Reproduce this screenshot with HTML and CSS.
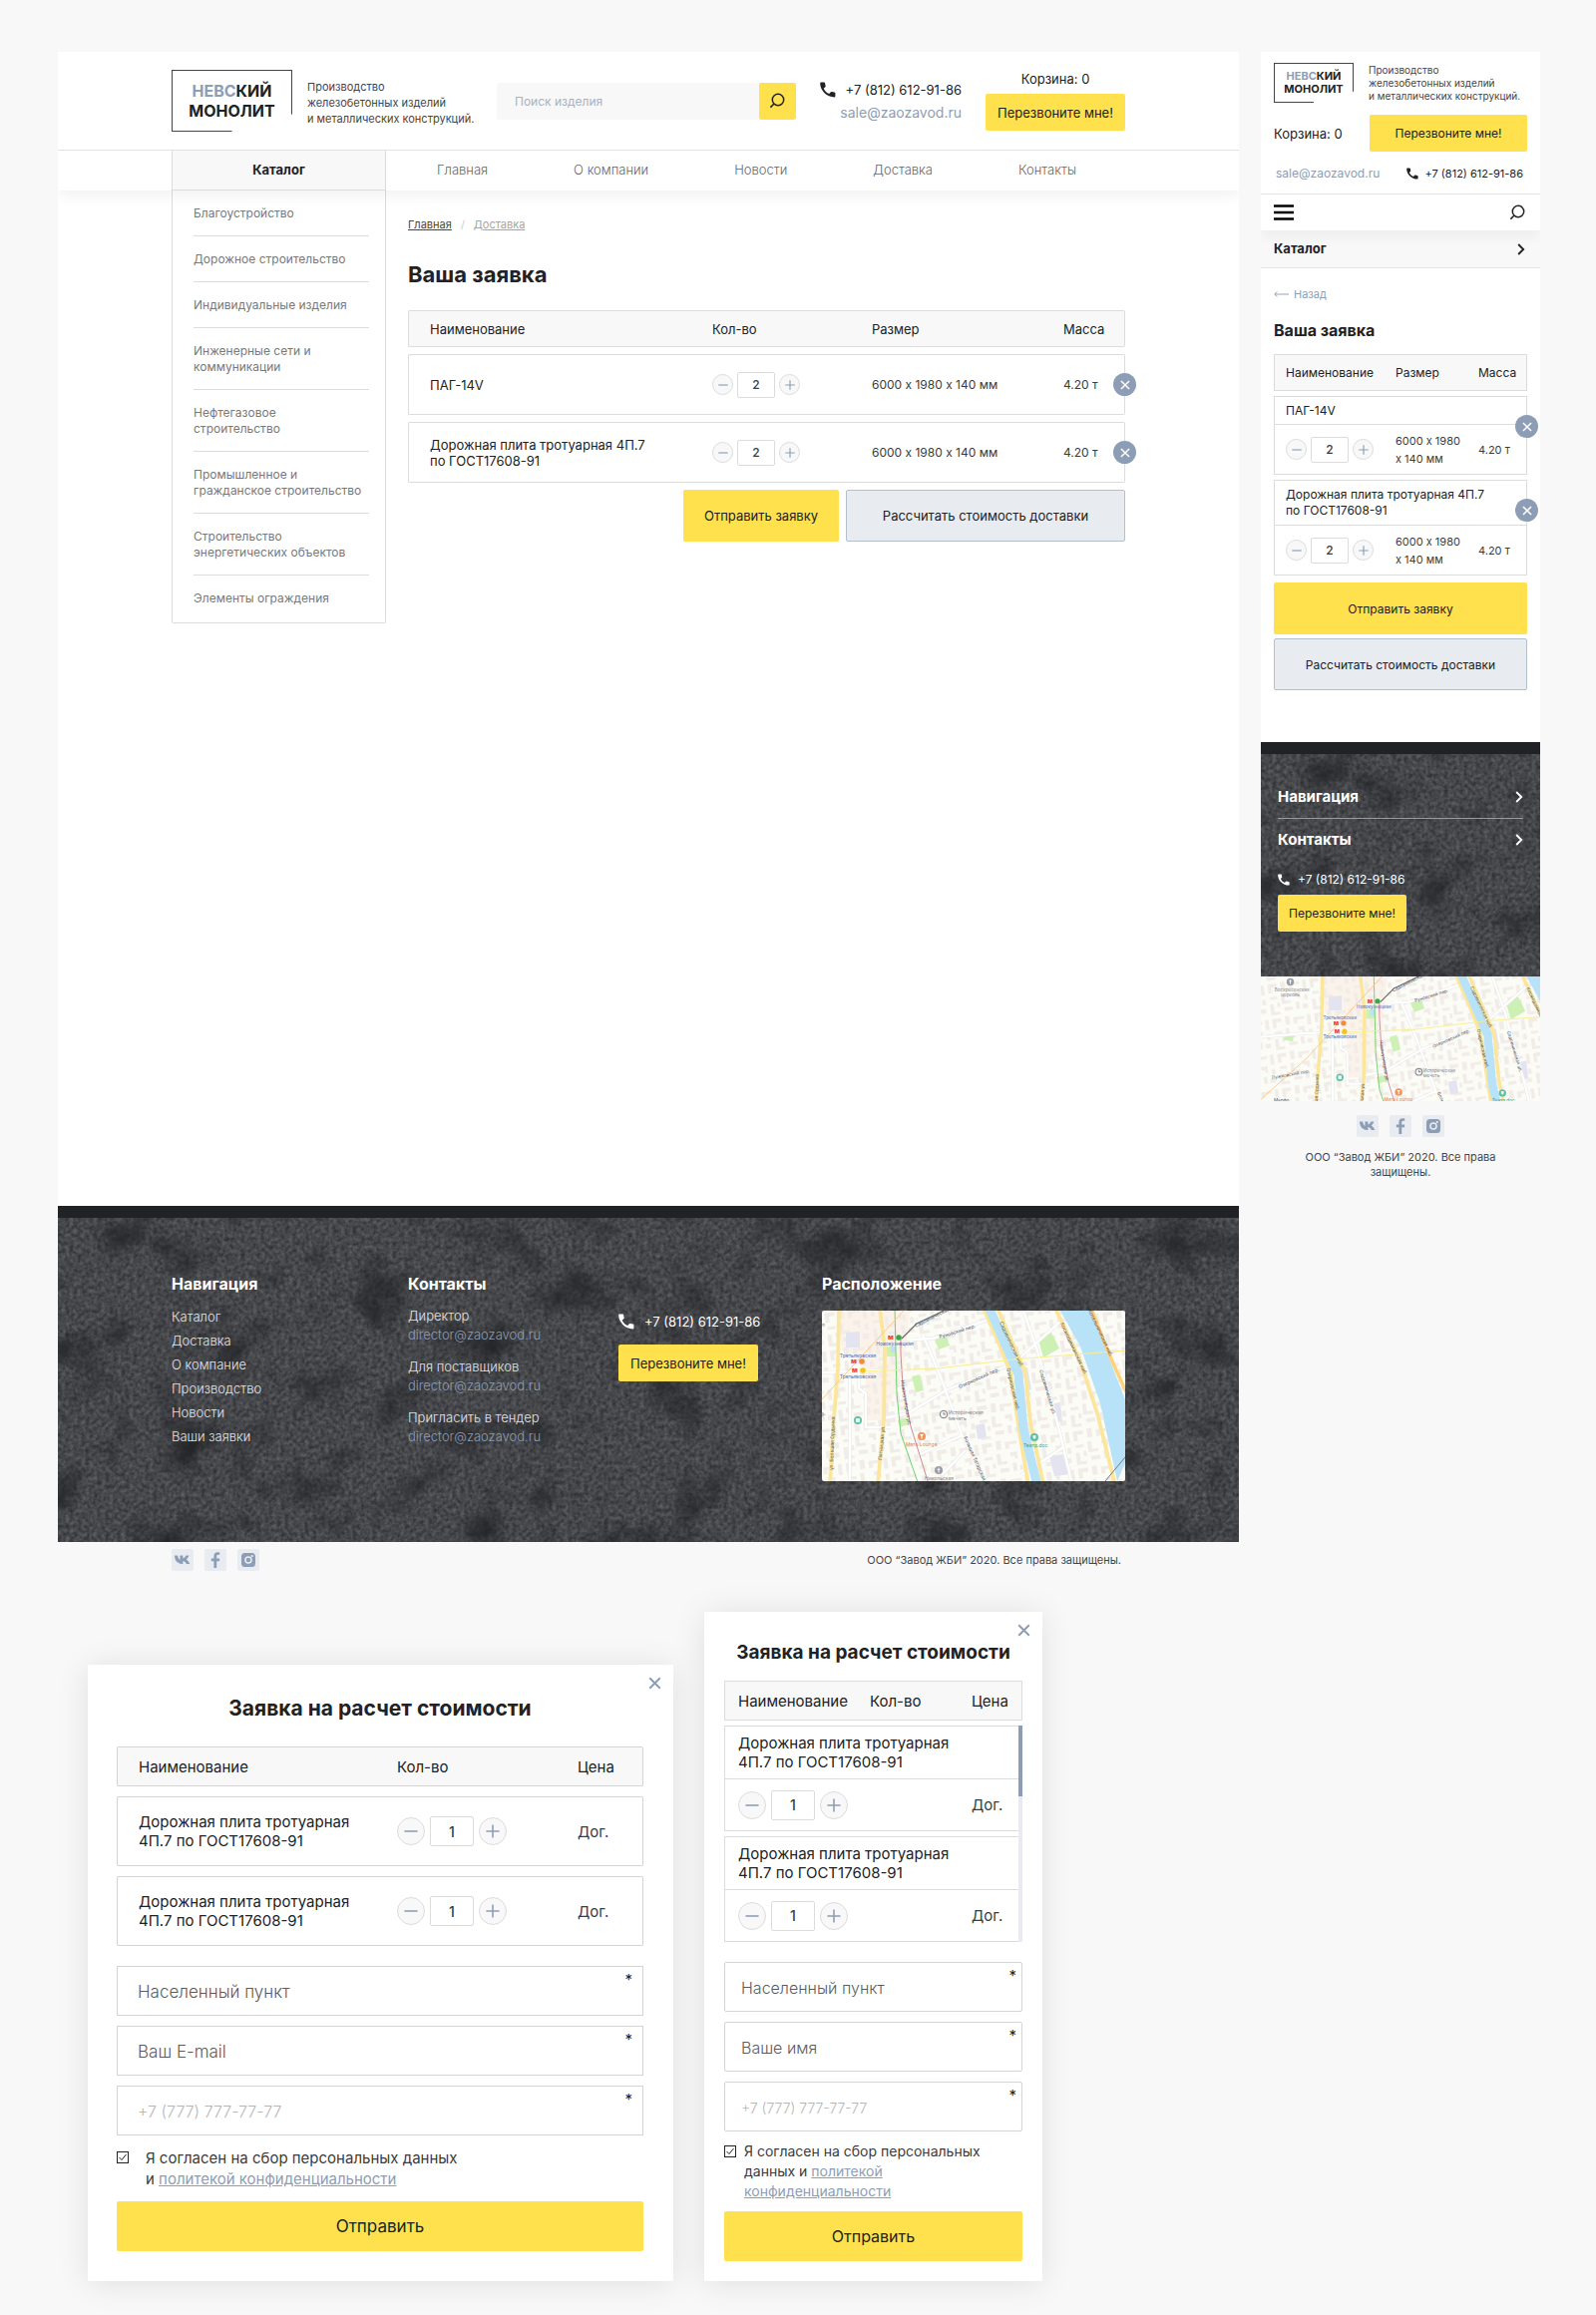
FILE: index.html
```html
<!DOCTYPE html>
<html lang="ru">
<head>
    <meta charset="UTF-8">
    <meta name="viewport" content="width=device-width, initial-scale=1.0">
    <title>Невский Монолит - Ваша заявка</title>
    <link rel="stylesheet" href="styles.css">
</head>
<body>
    <!-- shared icons -->
    <svg class="sprite" aria-hidden="true">
        <defs>
            <symbol id="i-phone" viewBox="0 0 16 16"><path d="M1 0.6h3.2c.5 0 .8.3.9.8.1 1 .3 1.900.6 2.800.1.3 0 .7-.2.9l-1.800 1.600c1.300 2.500 3 4.200 5.500 5.400l1.700-1.800c.2-.3.6-.3.9-.2.9.3 1.800.4 2.800.5.500 0 .8.4.8.9v3c0 .5-.3.9-.8.9C6.900 15.400.2 8.700.2 1.500c0-.5.3-.9.8-.9z"/></symbol>
            <symbol id="i-search" viewBox="0 0 16 16"><g fill="none" stroke="currentColor" stroke-width="1.500"><circle cx="9" cy="7" r="5.700"/><path d="M5 11l-3.600 3.600"/></g></symbol>
            <symbol id="i-plus" viewBox="0 0 16 16"><path d="M0.500 8h15M8 .5v15" fill="none" stroke="currentColor" stroke-width="1.800"/></symbol>
            <symbol id="i-minus" viewBox="0 0 16 16"><path d="M0.500 8h15" fill="none" stroke="currentColor" stroke-width="1.800"/></symbol>
            <symbol id="i-close" viewBox="0 0 16 16"><path d="M1.500 1.500l13 13M14.500 1.500l-13 13" fill="none" stroke="currentColor" stroke-width="2.400"/></symbol>
            <symbol id="i-chevron" viewBox="0 0 8 12"><path d="M1.200 1l5 5-5 5" fill="none" stroke="currentColor" stroke-width="1.900"/></symbol>
            <symbol id="i-back" viewBox="0 0 16 8"><path d="M16 4H1M3.500 1.200L.8 4l2.700 2.800" fill="none" stroke="currentColor"/></symbol>
            <symbol id="i-burger" viewBox="0 0 20 16"><path d="M0 1.500h20M0 8h20M0 14.500h20" fill="none" stroke="currentColor" stroke-width="2.400"/></symbol>
            <symbol id="i-vk" viewBox="0 0 16 16"><path d="M0 3.600h3.100c.3 2.100 1.200 3.800 2.300 4.600V3.600h3v3c1.300-.3 2.300-1.500 3-3h3c-.5 1.800-1.600 3.100-2.600 3.900 1.300.7 2.700 2.200 3.500 4.400h-3.400c-.6-1.400-1.800-2.600-3.500-2.900v2.900h-1C3.200 11.900.2 9 0 3.600z"/></symbol>
            <symbol id="i-fb" viewBox="0 0 16 16"><path d="M6.400 16V9.200H3.800V6.500h2.600V4.400C6.400 1.700 7.800.3 10.200.3c.8 0 1.500.1 2 .2v2.300h-1.300c-1.300 0-1.700.7-1.700 1.700v2h2.900v2.700H9.200V16z"/></symbol>
            <symbol id="i-inst" viewBox="0 0 16 16"><path fill-rule="evenodd" d="M4.500 1h7A3.500 3.500 0 0 1 15 4.500v7a3.500 3.500 0 0 1-3.500 3.500h-7A3.500 3.500 0 0 1 1 11.500v-7A3.500 3.500 0 0 1 4.500 1zM8 4.200a3.800 3.800 0 1 0 0 7.600 3.800 3.800 0 0 0 0-7.600zm0 1.500a2.300 2.300 0 1 1 0 4.600 2.300 2.300 0 0 1 0-4.600zM11.800 3a1.100 1.100 0 1 0 0 2.200 1.100 1.100 0 0 0 0-2.200z"/></symbol>

            <!-- concrete wall for the footers -->
            <filter id="concrete" x="0" y="0" width="100%" height="100%" color-interpolation-filters="sRGB">
                <feTurbulence type="fractalNoise" baseFrequency="0.250" numOctaves="4" seed="4" result="fine"/>
                <feColorMatrix in="fine" type="matrix" values="0.260 0 0 0 0.145  0.260 0 0 0 0.150  0.260 0 0 0 0.165  0 0 0 0 1" result="grain"/>
                <feTurbulence type="fractalNoise" baseFrequency="0.020" numOctaves="6" seed="11" result="big"/>
                <feColorMatrix in="big" type="matrix" values="0 0 0 0 0.140  0 0 0 0 0.145  0 0 0 0 0.160  -2.400 0 0 0 1.200" result="stains"/>
                <feMerge><feMergeNode in="grain"/><feMergeNode in="stains"/></feMerge>
            </filter>

            <pattern id="blocks" width="46" height="38" patternUnits="userSpaceOnUse" patternTransform="rotate(-8)">
                <path fill="#f1ece8" d="M2 3h10v4H6v6H2zM16 2h5v9h-5zM25 4h12v3h-8v4h-4zM40 3h4v11h-4zM3 17h8v3H3zM15 15h4v8h6v3H15zM29 15h7v7h-3v-3h-4zM40 19h4v6h-4zM2 25h4v9h6v3H2zM10 24h3v5h-3zM17 30h9v4h-9zM30 26h4v8h-4zM37 29h6v5h-6z"/>
            </pattern>

            <!-- city map, shared by both footers -->
            <g id="city">
                <rect x="-60" width="370" height="175" fill="#fcfcf7"/>
                <path fill="#fbf3ea" d="M14 0h74l-6 60-20 50H44V60L20 40z"/>
                <rect x="-60" width="370" height="175" fill="url(#blocks)"/>
                <g fill="#e4e4f0"><path d="M154 115l9-2 2 14-9 2zM233 93l6-1 2 19-7 1zM198 58l8-1 4 22-6 2zM228 146l14-2 5 20-14 2zM24 22l14-1v16H24z"/></g>
                <g fill="#cdf0b4"><path d="M217 29l13-7 8 16-16 9zM113 29l12-3 3 9-11 4zM90 66l8-2 4 16-8 2zM65 36h9v10h-9zM76 110l10-3 1 7-9 3zM-24 62l10 1-1 8-10-2z"/></g>
                <path fill="#b8e2f7" d="M69 36h5v6h-5z"/>
                <g fill="none" stroke="#e8e8e8" stroke-width="3.500">
                    <path d="M91 29l20-1 56-19M62 108l24-5 40-24 58-23M101 24l17 40 22 60 24 47M202 0l14 40 22 80 12 51M192 53l47-42M28 64v107M37 62v16l7 5v34h25M96 145l45-20M120 165l24-25M-50 66l50-4 60-2M200 165l42-28M200 64l10 30"/>
                </g>
                <g fill="none" stroke="#fff" stroke-width="2.400">
                    <path d="M91 29l20-1 56-19M62 108l24-5 40-24 58-23M101 24l17 40 22 60 24 47M202 0l14 40 22 80 12 51M192 53l47-42M28 64v107M37 62v16l7 5v34h25M96 145l45-20M120 165l24-25M-50 66l50-4 60-2M200 165l42-28M200 64l10 30"/>
                </g>
                <g fill="none" stroke="#fce69c" stroke-width="3.800">
                    <path d="M17-2l-1 60-4 50-4 66M58-2l5 40-1 72-6 64M162-2l15 34 12 30 9 60 9 52M176-2l15 34 13 30 5 50 13 62"/>
                    <path d="M234-2l24 50 18 55 18 72"/>
                </g>
                <path fill="none" stroke="#b8e2f7" stroke-width="9" d="M168-2l15 34 14 32 5 54 14 58"/>
                <path fill="#b8e2f7" d="M239 0h30l17 43 18 46v64l-8 18-17-78-20-57z"/>
                <path fill="none" stroke="#ffd17a" stroke-width="3.500" d="M270-2l18 46 18 40"/>
                <path fill="none" stroke="#777" d="M284 171l20-24"/>
                <path fill="none" stroke="#6fd06f" d="M73-2l2 85 4 40 18 52"/>
                <path fill="none" stroke="#d98596" d="M79 28v15l2 33 8 40 18 58"/>
                <path fill="none" stroke="#666" stroke-width="1.200" d="M124-1l-10 5-19 9-15 15"/>
                <path fill="none" stroke="#f9c98b" d="M82 0L0 89l-50 45"/>
                <path fill="none" stroke="#faee8a" d="M37 61l79-3 76-9 112-9"/>

                <g class="map-street">
                    <text transform="translate(94 17) rotate(-27)">Садовническая</text>
                    <text transform="translate(118 28) rotate(-17)">Руновский пер.</text>
                    <text transform="translate(138 78) rotate(-24)">Озерковский пер.</text>
                    <text transform="translate(178 12) rotate(65)">Садовническая наб.</text>
                    <text transform="translate(185 58) rotate(77)">Озерковская наб.</text>
                    <text transform="translate(218 60) rotate(73)">Садовническая ул.</text>
                    <text transform="translate(239 13) rotate(65)">Космодамианская наб.</text>
                    <text transform="translate(267 0) rotate(65)">Котельническая наб.</text>
                    <text transform="translate(79 70) rotate(81)">Новокузнецкая ул.</text>
                    <text transform="translate(142 127) rotate(66)">Большая Татарская ул.</text>
                    <text transform="translate(11 160) rotate(-88)">ул. Большая Ордынка</text>
                    <text transform="translate(60 150) rotate(-85)">Пятницкая ул.</text>
                    <text transform="translate(-38 112) rotate(-10)">Лужковский пер.</text>
                    <text x="-36" y="137">Марфо</text>
                </g>
                <g class="map-metro">
                    <text x="73" y="35">Новокузнецкая</text>
                    <text x="36" y="47">Третьяковская</text>
                    <text x="36" y="68">Третьяковская</text>
                </g>
                <g class="map-m">
                    <text x="66" y="29">м</text>
                    <text x="29" y="53">м</text>
                    <text x="30" y="62">м</text>
                </g>
                <circle cx="77" cy="27" r="2.800" fill="#3aa648"/>
                <circle cx="40" cy="51" r="2.800" fill="#f08a3c"/>
                <circle cx="41" cy="60" r="2.800" fill="#f3c51b"/>
                <g fill="none" stroke="#8c8f99" stroke-width="1.200">
                    <circle cx="122" cy="104" r="3.600"/><path d="M122 102v2h2"/>
                </g>
                <g fill="#9a9ca5"><circle cx="117" cy="160" r="4"/><circle cx="-18" cy="6" r="4"/></g>
                <path d="M117 157.500v5M115.500 159.300h3M-18 3.500v5M-19.500 5.300h3" stroke="#fff" stroke-width=".9"/>
                <g class="map-place">
                    <text x="127" y="104">Историческая</text>
                    <text x="127" y="110">мечеть</text>
                    <text x="103" y="170">Никольская</text>
                    <text x="-35" y="16">Воскресенская</text>
                    <text x="-28" y="22">церковь</text>
                </g>
                <circle cx="100" cy="126" r="4" fill="#f39157"/>
                <path d="M98 124h4l-2 2.500zM99.500 126h1v2.500h-1z" fill="#fff"/>
                <text class="map-cafe" x="84" y="136">Мята Lounge</text>
                <g fill="#5dbfa3"><circle cx="213" cy="127" r="4"/><circle cx="36" cy="110" r="4"/></g>
                <path d="M211.500 125h3v2.500l-1.500 1.500-1.500-1.500zM34 108h4v4h-4z" fill="#fff" opacity=".85"/>
                <text class="map-theatre" x="202" y="137">Театр.doc</text>
            </g>
        </defs>
    </svg>

    <div class="boards">
        <div class="desktop">
            <header>
                <div class="container top">
                    <a class="logo" href="#"><span>НЕВС</span>КИЙ<br>МОНОЛИТ</a>
                    <p class="tagline">Производство<br>железобетонных изделий<br>и металлических конструкций.</p>
                    <form class="search">
                        <input type="text" placeholder="Поиск изделия" aria-label="Поиск изделия">
                        <button type="button" aria-label="Найти"><svg><use href="#i-search"/></svg></button>
                    </form>
                    <div class="contacts">
                        <a class="tel" href="tel:+78126129186"><svg><use href="#i-phone"/></svg>+7 (812) 612-91-86</a>
                        <a class="mail" href="#">sale@zaozavod.ru</a>
                    </div>
                    <div class="cart">
                        <a href="#">Корзина: 0</a>
                        <button class="btn" type="button">Перезвоните мне!</button>
                    </div>
                </div>
                <div class="menu">
                    <div class="container">
                        <a class="menu-catalog" href="#">Каталог</a>
                        <nav>
                            <a href="#">Главная</a>
                            <a href="#">О компании</a>
                            <a href="#">Новости</a>
                            <a href="#">Доставка</a>
                            <a href="#">Контакты</a>
                        </nav>
                    </div>
                </div>
            </header>

            <main class="container page">
                <ul class="catalog">
                    <li><a href="#">Благоустройство</a></li>
                    <li><a href="#">Дорожное строительство</a></li>
                    <li><a href="#">Индивидуальные изделия</a></li>
                    <li><a href="#">Инженерные сети и<br>коммуникации</a></li>
                    <li><a href="#">Нефтегазовое<br>строительство</a></li>
                    <li><a href="#">Промышленное и<br>гражданское строительство</a></li>
                    <li><a href="#">Строительство<br>энергетических объектов</a></li>
                    <li><a href="#">Элементы ограждения</a></li>
                </ul>
                <section class="content">
                    <div class="crumbs"><a href="#">Главная</a><span>/</span><a class="current" href="#">Доставка</a></div>
                    <h1>Ваша заявка</h1>
                    <table class="order">
                        <thead>
                            <tr><th class="col-name">Наименование</th><th class="col-qty">Кол-во</th><th class="col-size">Размер</th><th>Масса</th></tr>
                        </thead>
                        <tbody>
                            <tr>
                                <td class="name">ПАГ-14V</td>
                                <td><div class="qty"><button type="button" aria-label="Меньше"><svg><use href="#i-minus"/></svg></button><input type="text" value="2" aria-label="Количество"><button type="button" aria-label="Больше"><svg><use href="#i-plus"/></svg></button></div></td>
                                <td>6000 х 1980 х 140 мм</td>
                                <td>4.20 т<button class="remove" type="button" aria-label="Удалить"><svg><use href="#i-close"/></svg></button></td>
                            </tr>
                            <tr>
                                <td class="name">Дорожная плита тротуарная 4П.7<br>по ГОСТ17608-91</td>
                                <td><div class="qty"><button type="button" aria-label="Меньше"><svg><use href="#i-minus"/></svg></button><input type="text" value="2" aria-label="Количество"><button type="button" aria-label="Больше"><svg><use href="#i-plus"/></svg></button></div></td>
                                <td>6000 х 1980 х 140 мм</td>
                                <td>4.20 т<button class="remove" type="button" aria-label="Удалить"><svg><use href="#i-close"/></svg></button></td>
                            </tr>
                        </tbody>
                    </table>
                    <div class="actions">
                        <button class="btn btn-send" type="button">Отправить заявку</button>
                        <button class="btn btn-gray" type="button">Рассчитать стоимость доставки</button>
                    </div>
                </section>
            </main>

            <footer class="footer">
                <svg class="wall" aria-hidden="true"><rect width="100%" height="100%" filter="url(#concrete)"/></svg>
                <div class="container footer-cols">
                    <div>
                        <h3>Навигация</h3>
                        <ul class="footer-nav">
                            <li><a href="#">Каталог</a></li>
                            <li><a href="#">Доставка</a></li>
                            <li><a href="#">О компание</a></li>
                            <li><a href="#">Производство</a></li>
                            <li><a href="#">Новости</a></li>
                            <li><a href="#">Ваши заявки</a></li>
                        </ul>
                    </div>
                    <div>
                        <h3>Контакты</h3>
                        <dl class="footer-mails">
                            <dt>Директор</dt><dd><a href="#">director@zaozavod.ru</a></dd>
                            <dt>Для поставщиков</dt><dd><a href="#">director@zaozavod.ru</a></dd>
                            <dt>Пригласить в тендер</dt><dd><a href="#">director@zaozavod.ru</a></dd>
                        </dl>
                    </div>
                    <div class="footer-call">
                        <a class="tel" href="tel:+78126129186"><svg><use href="#i-phone"/></svg>+7 (812) 612-91-86</a>
                        <button class="btn" type="button">Перезвоните мне!</button>
                    </div>
                    <div>
                        <h3>Расположение</h3>
                        <svg class="map" viewBox="0 0 304 171" preserveAspectRatio="xMidYMid slice"><use href="#city"/></svg>
                    </div>
                </div>
            </footer>
            <div class="container bottom">
                <div class="social">
                    <a href="#" aria-label="VK"><svg><use href="#i-vk"/></svg></a>
                    <a href="#" aria-label="Facebook"><svg><use href="#i-fb"/></svg></a>
                    <a href="#" aria-label="Instagram"><svg><use href="#i-inst"/></svg></a>
                </div>
                <p>ООО “Завод ЖБИ” 2020. Все права защищены.</p>
            </div>
        </div>

        <div class="mobile">
            <header>
                <div class="m-top">
                    <div class="m-row m-brand">
                        <a class="logo" href="#"><span>НЕВС</span>КИЙ<br>МОНОЛИТ</a>
                        <p class="tagline">Производство<br>железобетонных изделий<br>и металлических конструкций.</p>
                    </div>
                    <div class="m-row">
                        <a class="m-cart" href="#">Корзина: 0</a>
                        <button class="btn" type="button">Перезвоните мне!</button>
                    </div>
                    <div class="m-row m-contacts">
                        <a class="mail" href="#">sale@zaozavod.ru</a>
                        <a class="tel" href="tel:+78126129186"><svg><use href="#i-phone"/></svg>+7 (812) 612-91-86</a>
                    </div>
                </div>
                <div class="m-bar">
                    <button type="button" aria-label="Меню"><svg class="burger"><use href="#i-burger"/></svg></button>
                    <button type="button" aria-label="Поиск"><svg class="loupe"><use href="#i-search"/></svg></button>
                </div>
                <a class="m-catalog" href="#">Каталог<svg><use href="#i-chevron"/></svg></a>
            </header>
            <main class="m-page">
                <a class="back" href="#"><svg><use href="#i-back"/></svg>Назад</a>
                <h1>Ваша заявка</h1>
                <table class="m-order">
                    <thead>
                        <tr><th class="col-name">Наименование</th><th class="col-size">Размер</th><th>Масса</th></tr>
                    </thead>
                    <tbody>
                        <tr><td class="name" colspan="3">ПАГ-14V<button class="remove" type="button" aria-label="Удалить"><svg><use href="#i-close"/></svg></button></td></tr>
                        <tr>
                            <td><div class="qty"><button type="button" aria-label="Меньше"><svg><use href="#i-minus"/></svg></button><input type="text" value="2" aria-label="Количество"><button type="button" aria-label="Больше"><svg><use href="#i-plus"/></svg></button></div></td>
                            <td class="size">6000 х 1980<br>х 140 мм</td>
                            <td>4.20 т</td>
                        </tr>
                    </tbody>
                    <tbody>
                        <tr><td class="name name-tall" colspan="3">Дорожная плита тротуарная 4П.7<br>по ГОСТ17608-91<button class="remove" type="button" aria-label="Удалить"><svg><use href="#i-close"/></svg></button></td></tr>
                        <tr>
                            <td><div class="qty"><button type="button" aria-label="Меньше"><svg><use href="#i-minus"/></svg></button><input type="text" value="2" aria-label="Количество"><button type="button" aria-label="Больше"><svg><use href="#i-plus"/></svg></button></div></td>
                            <td class="size">6000 х 1980<br>х 140 мм</td>
                            <td>4.20 т</td>
                        </tr>
                    </tbody>
                </table>
                <div class="m-actions">
                    <button class="btn btn-send" type="button">Отправить заявку</button>
                    <button class="btn btn-gray" type="button">Рассчитать стоимость доставки</button>
                </div>
            </main>
            <footer class="footer m-footer">
                <svg class="wall" aria-hidden="true"><rect width="100%" height="100%" filter="url(#concrete)"/></svg>
                <div class="m-footer-in">
                    <h3>Навигация<svg><use href="#i-chevron"/></svg></h3>
                    <hr>
                    <h3>Контакты<svg><use href="#i-chevron"/></svg></h3>
                    <a class="tel" href="tel:+78126129186"><svg><use href="#i-phone"/></svg>+7 (812) 612-91-86</a>
                    <button class="btn" type="button">Перезвоните мне!</button>
                </div>
            </footer>
            <div class="m-bottom">
                <svg class="map" viewBox="-50 0 304 136" preserveAspectRatio="xMidYMid slice"><use href="#city"/></svg>
                <div class="social">
                    <a href="#" aria-label="VK"><svg><use href="#i-vk"/></svg></a>
                    <a href="#" aria-label="Facebook"><svg><use href="#i-fb"/></svg></a>
                    <a href="#" aria-label="Instagram"><svg><use href="#i-inst"/></svg></a>
                </div>
                <p>ООО “Завод ЖБИ” 2020. Все права<br>защищены.</p>
            </div>
        </div>
    </div>

    <div class="modals">
        <form class="modal">
            <button class="modal-close" type="button" aria-label="Закрыть"><svg><use href="#i-close"/></svg></button>
            <h2>Заявка на расчет стоимости</h2>
            <table class="calc">
                <thead>
                    <tr><th class="col-name">Наименование</th><th class="col-qty">Кол-во</th><th>Цена</th></tr>
                </thead>
                <tbody>
                    <tr>
                        <td class="name">Дорожная плита тротуарная<br>4П.7 по ГОСТ17608-91</td>
                        <td><div class="qty qty-lg"><button type="button" aria-label="Меньше"><svg><use href="#i-minus"/></svg></button><input type="text" value="1" aria-label="Количество"><button type="button" aria-label="Больше"><svg><use href="#i-plus"/></svg></button></div></td>
                        <td>Дог.</td>
                    </tr>
                    <tr>
                        <td class="name">Дорожная плита тротуарная<br>4П.7 по ГОСТ17608-91</td>
                        <td><div class="qty qty-lg"><button type="button" aria-label="Меньше"><svg><use href="#i-minus"/></svg></button><input type="text" value="1" aria-label="Количество"><button type="button" aria-label="Больше"><svg><use href="#i-plus"/></svg></button></div></td>
                        <td>Дог.</td>
                    </tr>
                </tbody>
            </table>
            <div class="fields">
                <label class="field"><input type="text" placeholder="Населенный пункт" aria-label="Населенный пункт"><span>*</span></label>
                <label class="field"><input type="text" placeholder="Ваш E-mail" aria-label="Ваш E-mail"><span>*</span></label>
                <label class="field field-tel"><input type="tel" placeholder="+7 (777) 777-77-77" aria-label="Телефон"><span>*</span></label>
            </div>
            <div class="consent">
                <input type="checkbox" id="agree" checked>
                <label for="agree">Я согласен на сбор персональных данных<br>и <a href="#">политекой конфиденциальности</a></label>
            </div>
            <button class="btn btn-submit" type="button">Отправить</button>
        </form>

        <form class="modal modal-sm">
            <button class="modal-close" type="button" aria-label="Закрыть"><svg><use href="#i-close"/></svg></button>
            <h2>Заявка на расчет стоимости</h2>
            <div class="calc-scroll">
                <table class="calc-sm">
                    <thead>
                        <tr><th class="col-name">Наименование</th><th class="col-qty">Кол-во</th><th>Цена</th></tr>
                    </thead>
                    <tbody>
                        <tr><td class="name" colspan="3">Дорожная плита тротуарная<br>4П.7 по ГОСТ17608-91</td></tr>
                        <tr>
                            <td colspan="2"><div class="qty qty-lg"><button type="button" aria-label="Меньше"><svg><use href="#i-minus"/></svg></button><input type="text" value="1" aria-label="Количество"><button type="button" aria-label="Больше"><svg><use href="#i-plus"/></svg></button></div></td>
                            <td>Дог.</td>
                        </tr>
                    </tbody>
                    <tbody>
                        <tr><td class="name" colspan="3">Дорожная плита тротуарная<br>4П.7 по ГОСТ17608-91</td></tr>
                        <tr>
                            <td colspan="2"><div class="qty qty-lg"><button type="button" aria-label="Меньше"><svg><use href="#i-minus"/></svg></button><input type="text" value="1" aria-label="Количество"><button type="button" aria-label="Больше"><svg><use href="#i-plus"/></svg></button></div></td>
                            <td>Дог.</td>
                        </tr>
                    </tbody>
                </table>
                <div class="scrollbar"></div>
            </div>
            <div class="fields">
                <label class="field"><input type="text" placeholder="Населенный пункт" aria-label="Населенный пункт"><span>*</span></label>
                <label class="field"><input type="text" placeholder="Ваше имя" aria-label="Ваше имя"><span>*</span></label>
                <label class="field field-tel"><input type="tel" placeholder="+7 (777) 777-77-77" aria-label="Телефон"><span>*</span></label>
            </div>
            <div class="consent">
                <input type="checkbox" id="agree-sm" checked>
                <label for="agree-sm">Я согласен на сбор персональных<br>данных и <a href="#">политекой<br>конфиденциальности</a></label>
            </div>
            <button class="btn btn-submit" type="button">Отправить</button>
        </form>
    </div>
</body>
</html>
```
FILE: styles.css
```css
* {
    box-sizing: border-box;
}
body {
    margin: 0;
    padding: 52px 56px 34px 58px;
    background: #f8f8f8;
    color: #202226;
    font-family: Inter, "Open Sans", sans-serif;
    font-size: 12px;
    line-height: 16px;
}
h1, h2, h3, p, ul, dl, dd {
    margin: 0;
    padding: 0;
}
ul {
    list-style: none;
}
a {
    color: inherit;
    text-decoration: none;
}
button, input {
    font-family: inherit;
    color: inherit;
}
button {
    border: none;
    padding: 0;
    background: none;
    cursor: pointer;
}
svg {
    display: block;
    fill: currentColor;
}
table {
    width: 100%;
    table-layout: fixed;
    border-spacing: 0;
}
th, td {
    padding: 0;
    text-align: left;
    color: #3a3c40;
}
th {
    font-weight: 400;
    color: #202226;
    background: #f8f8f8;
}
.sprite {
    position: absolute;
    width: 0;
    height: 0;
}
.boards {
    display: grid;
    grid-template-columns: minmax(0, 1fr) 280px;
    gap: 22px;
    align-items: start;
}
.container {
    max-width: 956px;
    margin: 0 auto;
}

/* common */
.btn {
    height: 37px;
    border-radius: 2px;
    background: #ffe14d;
    color: #202226;
    font-size: 13px;
}
.btn-send, .btn-gray {
    height: 52px;
}
.btn-gray {
    background: #e8ebf0;
    border: 1px solid #b4bfce;
}
.logo {
    width: 121px;
    padding: 11px 0;
    text-align: center;
    font-size: 16px;
    line-height: 20px;
    font-weight: 700;
    background:
        linear-gradient(#44464a, #44464a) 0 0 / 100% 1px no-repeat,
        linear-gradient(#44464a, #44464a) 0 0 / 1px 100% no-repeat,
        linear-gradient(#44464a, #44464a) 100% 0 / 1px 72% no-repeat,
        linear-gradient(#44464a, #44464a) 0 100% / 50% 1px no-repeat;
}
.logo span, .mail {
    color: #8d9db5;
}
.tagline {
    font-size: 11px;
    white-space: nowrap;
    color: #44464a;
}
.tel {
    display: flex;
    align-items: center;
    gap: 10px;
    white-space: nowrap;
}
.tel svg {
    width: 16px;
    height: 16px;
}
.qty {
    display: flex;
    align-items: center;
    gap: 4px;
}
.qty button {
    display: flex;
    align-items: center;
    justify-content: center;
    width: 21px;
    height: 21px;
    border: 1px solid #dcdcdc;
    border-radius: 50%;
    background: #f8f8f8;
    color: #8d9db5;
}
.qty svg {
    width: 10px;
    height: 10px;
}
.qty input {
    width: 38px;
    height: 26px;
    padding: 0;
    border: 1px solid #dcdcdc;
    border-radius: 2px;
    text-align: center;
    font-size: 12px;
    font-weight: 500;
}
.qty-lg {
    gap: 5px;
}
.qty-lg button {
    width: 28px;
    height: 28px;
}
.qty-lg svg {
    width: 14px;
    height: 14px;
}
.qty-lg input {
    width: 44px;
    height: 30px;
    font-size: 14px;
}
.remove {
    position: absolute;
    right: -12px;
    top: 18px;
    display: flex;
    align-items: center;
    justify-content: center;
    width: 23px;
    height: 23px;
    border-radius: 50%;
    background: #8d9db5;
    color: #fff;
}
.remove svg {
    width: 10px;
    height: 10px;
}

/* desktop header */
.desktop > header, .mobile > header, .m-page {
    background: #fff;
}
.top {
    display: flex;
    align-items: center;
    gap: 24px;
    padding: 18px 0;
}
.top .logo, .top .tagline {
    flex: none;
}
.top .tagline {
    width: 175px;
    margin: 4px -9px 0;
}
.search {
    display: flex;
    flex: 1;
    height: 37px;
}
.search input {
    flex: 1;
    min-width: 0;
    padding: 0 18px;
    border: none;
    border-radius: 2px 0 0 2px;
    background: #f8f8f8;
    font-size: 12px;
}
.search input::placeholder {
    color: #a6b2c5;
}
.search button {
    display: flex;
    align-items: center;
    justify-content: center;
    width: 37px;
    border-radius: 2px;
    background: #ffe14d;
}
.search svg, .loupe {
    width: 16px;
    height: 16px;
}
.contacts {
    display: flex;
    flex-direction: column;
    gap: 7px;
    align-items: flex-end;
    font-size: 13px;
}
.contacts .mail {
    font-size: 14px;
}
.cart {
    display: flex;
    flex-direction: column;
    gap: 7px;
    align-items: center;
    font-size: 13px;
}
.cart .btn, .footer-call .btn {
    width: 140px;
}
.menu {
    border-top: 1px solid #e3e3e3;
    background: #fff;
    box-shadow: 0 6px 14px rgba(0, 0, 0, 0.05);
}
.desktop .menu {
    clip-path: inset(0 0 -24px 0);
}
.menu .container {
    display: flex;
    align-items: center;
    height: 40px;
}
.menu-catalog {
    width: 215px;
    line-height: 39px;
    border: 1px solid #dcdcdc;
    border-top: none;
    background: #f8f8f8;
    text-align: center;
    font-size: 13px;
    font-weight: 700;
}
.menu nav {
    display: flex;
    flex: 1;
    justify-content: space-between;
    padding: 0 49px 2px 51px;
    font-size: 13px;
    color: #66686c;
    font-weight: 300;
}

/* desktop page */
.desktop {
    background: linear-gradient(#fff, #fff) 0 0 / 100% 1157px no-repeat;
}
.page {
    display: flex;
    align-items: flex-start;
    gap: 22px;
    padding-bottom: 584px;
}
.catalog {
    width: 215px;
    padding: 0 16px 0 21px;
    border: 1px solid #dcdcdc;
    border-top: none;
    border-radius: 0 0 2px 2px;
    color: #77797d;
}
.catalog li {
    padding: 15px 0 14px;
    border-bottom: 1px solid #dcdcdc;
    white-space: nowrap;
}
.catalog li:last-child {
    padding-bottom: 16px;
    border: none;
}
.content {
    flex: 1;
    padding-top: 26px;
}
.crumbs {
    display: flex;
    gap: 9px;
    font-size: 11px;
    color: #44464a;
}
.crumbs a {
    text-decoration: underline;
}
.crumbs span {
    color: #ccc;
}
.crumbs .current {
    color: #a3a5a9;
}
.content h1 {
    margin: 28px 0 15px;
    font-size: 22px;
    line-height: 28px;
}
.order {
    border-spacing: 0 7px;
}
.order th, .order td {
    border: solid #dcdcdc;
    border-width: 1px 0;
}
.order th {
    height: 37px;
}
.order td {
    position: relative;
    height: 61px;
}
.order th, .order .name {
    font-size: 13px;
}
.order tr > :first-child {
    padding-left: 21px;
    border-left-width: 1px;
    border-radius: 2px 0 0 2px;
}
.order tr > :last-child {
    border-right-width: 1px;
    border-radius: 0 2px 2px 0;
}
.order .col-name {
    width: 305px;
}
.order .col-qty {
    width: 160px;
}
.order .col-size {
    width: 192px;
}
td.name {
    color: #202226;
}
.actions {
    display: flex;
    justify-content: flex-end;
    gap: 7px;
}
.actions .btn-send {
    width: 156px;
}
.actions .btn-gray {
    width: 280px;
}

/* footer */
.footer {
    position: relative;
    border-top: 12px solid #202226;
    background: #434549;
    color: #fff;
}
.wall {
    position: absolute;
    left: 0;
    top: 0;
    width: 100%;
    height: 100%;
}
.footer h3 {
    font-size: 16px;
    line-height: 20px;
}
.footer-cols {
    position: relative;
    display: grid;
    grid-template-columns: 237px 211px 204px 1fr;
    padding: 56px 0 61px;
}
.footer-nav {
    margin-top: 11px;
    font-size: 13px;
    line-height: 24px;
    color: #e2e3e5;
    font-weight: 300;
}
.footer-mails {
    margin-top: 13px;
    font-size: 13px;
    line-height: 19px;
    color: #e2e3e5;
    font-weight: 300;
}
.footer-mails dd {
    margin-bottom: 13px;
    color: #8d9db5;
}
.footer-call {
    padding-top: 40px;
    font-size: 13px;
}
.footer-call .btn {
    margin-top: 15px;
}
.footer .map {
    width: 100%;
    height: 171px;
    margin-top: 17px;
    border-radius: 2px;
}
.map-street, .map-place, .map-metro, .map-cafe, .map-theatre {
    font-size: 5px;
}
.map-street {
    fill: #55575c;
}
.map-metro {
    fill: #4a6bb5;
    text-anchor: middle;
}
.map-m {
    fill: #e8413a;
    font-size: 7px;
    font-weight: 800;
}
.map-place {
    fill: #85878f;
}
.map-cafe {
    fill: #f08340;
}
.map-theatre {
    fill: #3aa083;
}
.bottom {
    display: flex;
    justify-content: space-between;
    align-items: center;
    padding: 7px 4px 0 0;
    font-size: 11px;
    color: #44464a;
}
.social {
    display: flex;
    gap: 11px;
}
.social a {
    padding: 3px;
    border-radius: 2px;
    background: #e8ecf1;
    color: #8d9db5;
}
.social svg {
    width: 16px;
    height: 16px;
}

/* mobile */
.mobile .logo {
    width: 80px;
    padding: 7px 0;
    font-size: 11px;
    line-height: 13px;
}
.mobile .tagline {
    font-size: 10px;
    line-height: 13px;
}
.m-top {
    display: flex;
    flex-direction: column;
    gap: 12px;
    padding: 11px 13px 10px;
}
.m-row {
    display: flex;
    align-items: center;
    justify-content: space-between;
}
.m-row.m-brand {
    justify-content: flex-start;
    gap: 15px;
}
.m-cart {
    font-size: 13px;
}
.m-row .btn {
    width: 158px;
    font-size: 12px;
}
.m-contacts {
    padding: 0 4px 0 2px;
    line-height: 20px;
}
.m-contacts .tel {
    font-size: 11px;
}
.mobile .tel {
    gap: 6px;
}
.mobile .tel svg {
    width: 12px;
    height: 12px;
}
.m-bar {
    position: relative;
    display: flex;
    align-items: center;
    justify-content: space-between;
    height: 37px;
    padding: 0 15px 0 13px;
    border-top: 1px solid #e3e3e3;
    background: #fff;
    box-shadow: 0 6px 14px rgba(0, 0, 0, 0.05);
    clip-path: inset(0 0 -24px 0);
}
.burger {
    width: 20px;
    height: 16px;
    color: #000;
}
.m-catalog {
    display: flex;
    align-items: center;
    justify-content: space-between;
    padding: 0 15px 0 13px;
    line-height: 37px;
    border-bottom: 1px solid #e3e3e3;
    background: #f8f8f8;
    font-size: 13px;
    font-weight: 700;
}
.m-catalog svg, .m-footer h3 svg {
    width: 8px;
    height: 12px;
}
.m-page {
    padding: 18px 13px 52px;
}
.back {
    display: flex;
    align-items: center;
    gap: 5px;
    font-size: 11px;
    color: #8d9db5;
}
.back svg {
    width: 15px;
    height: 8px;
}
.m-page h1 {
    margin: 18px 0 14px;
    font-size: 16px;
    line-height: 20px;
}
.m-page .btn {
    font-size: 12px;
}
.m-order td {
    font-size: 11px;
}
.m-order td.name {
    font-size: 12px;
}
.m-order th {
    height: 37px;
}
.m-order .col-name {
    width: 122px;
}
.m-order .col-size {
    width: 83px;
}
.m-order thead th, .calc-sm thead th {
    border: solid #dcdcdc;
    border-width: 1px 0;
}
.m-order tr > :first-child {
    padding-left: 11px;
    border-left: 1px solid #dcdcdc;
}
.m-order tr > :last-child, .calc-sm tr > :last-child {
    border-right: 1px solid #dcdcdc;
}
.m-order tbody::before, .calc-sm tbody::before {
    content: "";
    display: block;
    height: 5px;
}
.m-order td, .calc-sm td {
    border-bottom: 1px solid #dcdcdc;
    position: relative;
}
.m-order .name, .calc-sm .name {
    border-top: 1px solid #dcdcdc;
}
.m-order td {
    height: 50px;
}
.m-order td.name {
    height: 29px;
}
.m-order td.name-tall {
    height: 46px;
}
.m-order .name {
    z-index: 1;
}
.m-order .size {
    line-height: 18px;
}
.m-actions {
    display: flex;
    flex-direction: column;
    gap: 4px;
    margin-top: 7px;
}
.m-footer-in {
    position: relative;
    padding: 33px 17px 45px;
}
.m-footer h3 {
    display: flex;
    align-items: center;
    justify-content: space-between;
    font-size: 15px;
}
.m-footer hr {
    height: 1px;
    margin: 11px 0;
    border: none;
    background: #999a9d;
}
.m-footer .tel {
    gap: 8px;
    margin-top: 20px;
    line-height: 20px;
}
.m-footer .btn {
    width: 129px;
    margin-top: 5px;
    font-size: 12px;
}
.m-bottom .map {
    width: 100%;
    height: 125px;
}
.m-bottom .social {
    justify-content: center;
    margin: 14px 0 13px;
}
.m-bottom p {
    text-align: center;
    font-size: 11px;
    line-height: 15px;
    color: #44464a;
}

/* modals */
.modals {
    display: flex;
    align-items: flex-end;
    gap: 31px;
    margin: 41px 0 0 30px;
}
.modal {
    position: relative;
    width: 587px;
    padding: 31px 30px 30px 29px;
    background: #fff;
    box-shadow: 0 2px 30px rgba(0, 0, 0, 0.1);
    font-size: 15px;
    line-height: 19px;
}
.modal-close {
    position: absolute;
    top: 12px;
    right: 12px;
    color: #8d9db5;
}
.modal-close svg {
    width: 13px;
    height: 13px;
}
.modal h2 {
    margin-bottom: 15px;
    text-align: center;
    font-size: 21px;
    line-height: 26px;
}
.calc {
    border-spacing: 0 10px;
}
.calc th, .calc td {
    border: solid #d4d4d4;
    border-width: 1px 0;
}
.calc th {
    height: 40px;
}
.calc td {
    height: 70px;
}
.calc tr > :first-child {
    padding-left: 21px;
    border-left-width: 1px;
    border-radius: 2px 0 0 2px;
}
.calc tr > :last-child {
    border-right-width: 1px;
    border-radius: 0 2px 2px 0;
}
.calc .col-name {
    width: 281px;
}
.calc .col-qty {
    width: 181px;
}
.fields {
    display: flex;
    flex-direction: column;
    gap: 10px;
    margin-top: 10px;
}
.field {
    position: relative;
}
.field input {
    display: block;
    width: 100%;
    height: 50px;
    padding: 2px 20px 0;
    border: 1px solid #d4d4d4;
    font-size: 17px;
    font-weight: 300;
}
.field input::placeholder {
    color: #5a5c60;
}
.field-tel input {
    font-size: 16px;
}
.field-tel input::placeholder {
    color: #b5b6b8;
}
.field span {
    position: absolute;
    top: 4px;
    right: 11px;
}
.consent {
    display: flex;
    align-items: flex-start;
    gap: 17px;
    margin: 12px 0;
    line-height: 21px;
    color: #3a3c40;
}
.consent input {
    appearance: none;
    flex: none;
    width: 12px;
    height: 12px;
    margin: 4px 0 0;
    border: 1px solid #202226;
}
.consent input:checked {
    background: url("data:image/svg+xml,%3Csvg xmlns='http://www.w3.org/2000/svg' viewBox='0 0 10 10'%3E%3Cpath d='M1.500 5l2.500 2.500 4.500-5.500' fill='none' stroke='%23202226'/%3E%3C/svg%3E");
}
.consent a {
    color: #8d9db5;
    text-decoration: underline;
}
.btn-submit {
    width: 100%;
    height: 50px;
    font-size: 17px;
}
.modal-sm {
    width: 339px;
    padding: 29px 20px 20px;
}
.modal-sm h2 {
    margin: 0 -10px 16px;
    font-size: 19px;
    line-height: 24px;
}
.calc-scroll {
    position: relative;
}
.scrollbar {
    position: absolute;
    top: 45px;
    right: 0;
    bottom: 0;
    width: 4px;
    background: linear-gradient(#8d9db5, #8d9db5) 0 0 / 100% 71px no-repeat #e8ebf2;
}
.calc-sm th {
    height: 40px;
}
.calc-sm td {
    height: 52px;
}
.calc-sm td.name {
    height: 54px;
}
.calc-sm tr > :first-child {
    padding-left: 13px;
    border-left: 1px solid #dcdcdc;
}
.calc-sm .col-name {
    width: 146px;
}
.calc-sm .col-qty {
    width: 102px;
}
.modal-sm .fields {
    margin-top: 20px;
}
.modal-sm .field input {
    padding: 2px 16px 0;
    border-radius: 2px;
    font-size: 16px;
}
.modal-sm .field-tel input {
    font-size: 14px;
}
.modal-sm .field span {
    right: 6px;
}
.modal-sm .consent {
    gap: 8px;
    margin: 10px 0;
    font-size: 14px;
    line-height: 20px;
}
.modal-sm .btn-submit {
    font-size: 16px;
}
```
